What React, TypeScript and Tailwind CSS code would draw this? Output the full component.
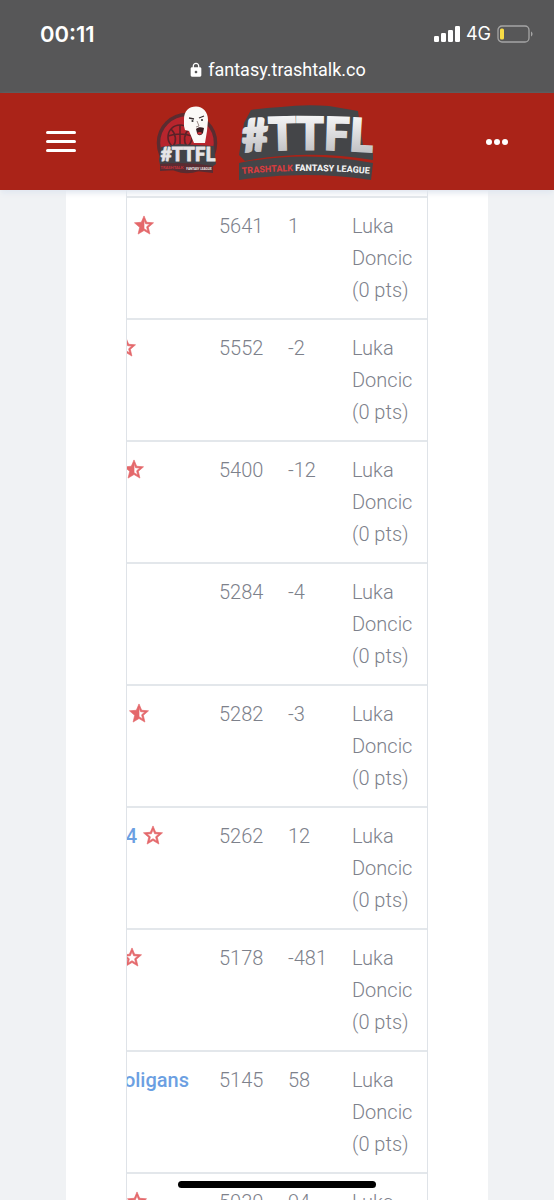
import { MdLock } from 'react-icons/md';

type Star = 'half' | 'outline';

type Row = {
  label?: string;
  star?: Star;
  visible: number;
  score: number;
  diff: number;
};

// visible = how much of the team cell is left once the table is scrolled
const rows: Row[] = [
  { star: 'half', visible: 27, score: 5641, diff: 1 },
  { star: 'outline', visible: 9, score: 5552, diff: -2 },
  { star: 'half', visible: 17, score: 5400, diff: -12 },
  { visible: 0, score: 5284, diff: -4 },
  { star: 'half', visible: 22, score: 5282, diff: -3 },
  { label: '4', star: 'outline', visible: 36, score: 5262, diff: 12 },
  { star: 'outline', visible: 15, score: 5178, diff: -481 },
  { label: 'oligans', visible: 62, score: 5145, diff: 58 },
  { star: 'outline', visible: 20, score: 5030, diff: 94 },
];

function StarIcon({ type }: { type: Star }) {
  return (
    <svg viewBox="1.5 1.5 21 20" className="mb-0.5 h-5 w-5 shrink-0" fill="#e4686b" stroke="#e4686b" strokeWidth="0.7">
      {type === 'half' ? (
        <path d="M22 9.24l-7.19-.62L12 2 9.19 8.63 2 9.24l5.46 4.73L5.82 21 12 17.27 18.18 21l-1.63-7.03L22 9.24zM12 15.4V6.1l1.71 4.04 4.38.38-3.32 2.88 1 4.28L12 15.4z" />
      ) : (
        <path d="M22 9.24l-7.19-.62L12 2 9.19 8.63 2 9.24l5.46 4.73L5.82 21 12 17.27 18.18 21l-1.63-7.03L22 9.24zM12 15.4l-3.76 2.27 1-4.28-3.32-2.88 4.38-.38L12 6.1l1.71 4.04 4.38.38-3.32 2.88 1 4.28L12 15.4z" />
      )}
    </svg>
  );
}

function StatusBar() {
  return (
    <div className="h-[93px] shrink-0 bg-[#575758] text-white">
      <div className="flex h-[68px] items-center justify-between pr-5 pl-10 font-['Inter']">
        <span className="text-[22px] font-semibold">00:11</span>
        <div className="flex items-center gap-1.5">
          <svg viewBox="0 0 26 16" className="h-4 w-[26px]" fill="#fff">
            <rect x="0" y="10" width="5" height="6" rx="1.2" />
            <rect x="7" y="7" width="5" height="9" rx="1.2" />
            <rect x="14" y="4" width="5" height="12" rx="1.2" />
            <rect x="21" y="0" width="5" height="16" rx="1.2" />
          </svg>
          <span className="text-lg">4G</span>
          <svg viewBox="0 0 37 18" className="h-[18px] w-[37px]">
            <rect x="1" y="1" width="31" height="16" rx="4" fill="none" stroke="#a5a5a5" strokeWidth="1.3" />
            <rect x="3" y="3.5" width="4" height="11" rx="1.5" fill="#f8dc45" />
            <path d="M34 6.5c2 .8 2 4.2 0 5z" fill="#a5a5a5" />
          </svg>
        </div>
      </div>
      <div className="-mt-2 flex items-center justify-center gap-1">
        <MdLock className="h-4 w-4" />
        <span className="font-['Roboto'] text-lg leading-5">fantasy.trashtalk.co</span>
      </div>
    </div>
  );
}

function BadgeLogo() {
  return (
    <svg viewBox="0 0 66 74" className="h-[74px] w-[66px]">
      <circle cx="31" cy="38" r="28.5" fill="#b8252d" stroke="#5a2c30" strokeWidth="3.5" />
      <g fill="none" stroke="#5b2228" strokeWidth="1.6">
        <circle cx="24" cy="32" r="12" />
        <path d="M12 31q12-4 24 0M24 20v24M15 24c5 5 6 12 2 18M33 24c-5 5-6 12-2 18" />
      </g>
      <path d="M28 14c0-8 5-12.5 12-12.5S52 7 52 15l-1 11-2 12H38l-5-12-4-1-1-4z" fill="#fbf9f7" />
      <path d="M33 13l5 1M43 13l5-2" stroke="#3b3032" strokeWidth="1.3" />
      <circle cx="36.5" cy="16" r="1.1" fill="#333" />
      <circle cx="46" cy="15" r="1.1" fill="#333" />
      <path d="M41 16l2 5-3 1" fill="none" stroke="#9a8c88" />
      <path d="M40 24c2-2 5-2 8-1l-1 5c-2 3-5 3-6 0z" fill="#3a1e22" />
      <path d="M41 28c2-1.5 4-1.5 5 0-1 2-4 2-5 0z" fill="#cd3038" />
      <path d="M5 42l18-3 35 2 2 18-4 3-52-2-1-5z" fill="#424247" />
      <path d="M4 59q27-3 53 2v7q-26-4-53-2z" fill="#5a2c32" />
      <g fontFamily="Lato, sans-serif" fontWeight="900" textAnchor="middle">
        <text x="32" y="56" fontSize="19" fill="#e6e4e6" stroke="#e6e4e6" strokeWidth="0.8">
          #TTFL
        </text>
        <text x="16" y="64" fontSize="4" fill="#c6343a">TRASHTALK</text>
        <text x="43" y="65" fontSize="3" fill="#eeeeee">FANTASY LEAGUE</text>
      </g>
    </svg>
  );
}

function WordLogo() {
  return (
    <svg viewBox="0 0 136 78" className="h-[78px] w-[136px]">
      <defs>
        <linearGradient id="silver" x1="0" y1="0" x2="0" y2="1">
          <stop offset="0.2" stopColor="#f4f4f5" />
          <stop offset="0.9" stopColor="#bcbcbf" />
        </linearGradient>
        <path id="arch" d="M5 49Q68 44 134 49" />
        <path id="band" d="M4 71Q68 65 134 71" />
      </defs>
      <path d="M13 7Q27 5 43 4 67 1 91 3L120 8l5 34 10 3v12Q68 46 7 58L1 52l5-32z" fill="#444548" />
      <path d="M1 60Q68 47 135 60L133 77Q68 67 1 77z" fill="#444548" />
      <text fontFamily="Lato, sans-serif" fontWeight="900" fontSize="45" fill="url(#silver)" stroke="url(#silver)" strokeWidth="2">
        <textPath href="#arch">#TTFL</textPath>
      </text>
      <text fontFamily="Roboto, sans-serif" fontWeight="800" fontSize="9" fill="#f1f1f1">
        <textPath href="#band">
          <tspan fill="#d83c3e">TRASHTALK</tspan> FANTASY LEAGUE
        </textPath>
      </text>
    </svg>
  );
}

function Header() {
  return (
    <header className="relative z-10 flex h-[97px] shrink-0 items-center bg-[#aa2318] px-[46px] shadow-md shadow-slate-200">
      <button aria-label="Menu" className="flex w-[30px] flex-col gap-1.5">
        <span className="h-[3px] w-full rounded-sm bg-white" />
        <span className="h-[3px] w-full rounded-sm bg-white" />
        <span className="h-[3px] w-full rounded-sm bg-white" />
      </button>
      <a href="#" aria-label="TrashTalk Fantasy League" className="ml-20 flex items-center gap-4">
        <BadgeLogo />
        <WordLogo />
      </a>
      <button aria-label="More" className="ml-auto flex gap-0.5">
        <span className="h-1.5 w-1.5 rounded-full bg-white" />
        <span className="h-1.5 w-1.5 rounded-full bg-white" />
        <span className="h-1.5 w-1.5 rounded-full bg-white" />
      </button>
    </header>
  );
}

export default function App() {
  return (
    <div className="relative flex h-screen flex-col overflow-hidden bg-[#f0f2f4] font-['Roboto',sans-serif]">
      <StatusBar />
      <Header />
      <main className="mx-[66px] min-h-0 flex-1 overflow-hidden bg-white px-[60px]">
        <div className="overflow-hidden border-x border-[#dfe3e8] pt-1.5">
          <table className="w-full table-fixed border-collapse text-left text-xl leading-8 font-light text-[#7d818b]">
            <colgroup>
              <col />
              <col className="w-[69px]" />
              <col className="w-16" />
              <col className="w-[87px]" />
            </colgroup>
            <tbody>
              {rows.map((row) => (
                <tr key={row.score} className="border-t-2 border-[#e3e7eb] align-top">
                  <td className="py-3">
                    <a
                      href="#"
                      className="flex h-8 items-center justify-end gap-1.5 overflow-hidden font-medium text-[#6c9fe2]"
                      style={{ width: row.visible }}
                    >
                      {row.label && <span>{row.label}</span>}
                      {row.star && <StarIcon type={row.star} />}
                    </a>
                  </td>
                  <td className="py-3 pl-3">{row.score}</td>
                  <td className="py-3 pl-3">{row.diff}</td>
                  <td className="px-3 py-3">Luka Doncic (0&nbsp;pts)</td>
                </tr>
              ))}
            </tbody>
          </table>
        </div>
      </main>
      <div className="absolute bottom-3 left-1/2 z-20 h-[7px] w-[198px] -translate-x-1/2 rounded-full bg-black" />
    </div>
  );
}
